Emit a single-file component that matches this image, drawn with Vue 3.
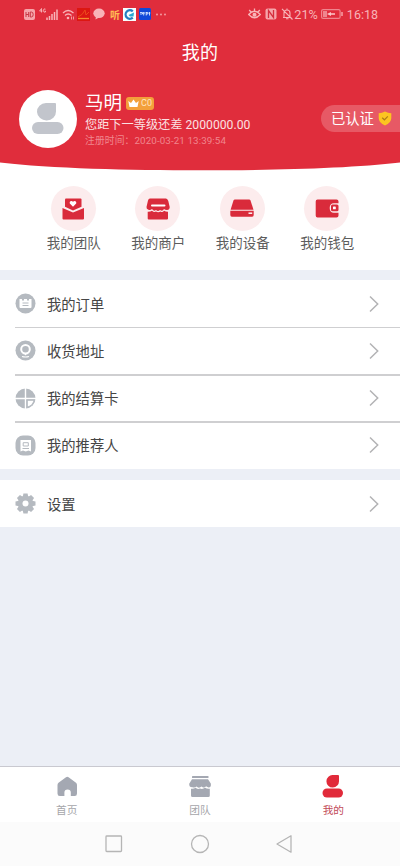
<script setup>
const shortcuts = [
  { id: 'team', label: '我的团队' },
  { id: 'shop', label: '我的商户' },
  { id: 'device', label: '我的设备' },
  { id: 'wallet', label: '我的钱包' },
]
const rows = [
  { id: 'order', label: '我的订单' },
  { id: 'address', label: '收货地址' },
  { id: 'card', label: '我的结算卡' },
  { id: 'referrer', label: '我的推荐人' },
  { id: 'settings', label: '设置' },
]
const tabs = [
  { id: 'home', label: '首页' },
  { id: 'group', label: '团队' },
  { id: 'mine', label: '我的' },
]
</script>

<template>
  <div class="screen">
    <header class="hero">
      <svg class="hero-bg" viewBox="0 0 400 171" preserveAspectRatio="none">
        <path d="M0 0H400V162.500C350 168.500 270 170.300 200 170.300S50 168.500 0 162.500Z" fill="#e02d3c" />
      </svg>
      <div class="status">
        <div class="status-left">
          <svg width="11" height="11" viewBox="0 0 11 11"><rect width="11" height="11" rx="2" fill="#f6a5aa" /><path d="M2 3V8M2 5.500H4.700M4.700 3V8M6.300 3V8H7.300Q9.200 8 9.200 5.500T7.300 3Z" fill="none" stroke="#c83744" stroke-width="1" /></svg>
          <svg class="signal" width="20" height="12" viewBox="0 0 20 12"><path d="M2.500 .5L.6 3H3.500M2.500 .5V4.500M6.500 1.200Q4.500 0 4.500 2.500T6.500 4V3H5.700" fill="none" stroke="#f8b4b8" stroke-width=".9" /><path d="M8 9.500V12M10.500 8V12M13 6V12M15.500 4V12M18 1.500V12" stroke="#f8b4b8" stroke-width="1.500" /></svg>
          <svg class="wifi" width="13" height="11" viewBox="0 0 13 11"><path d="M1 4Q6 -1 11.500 4M3 6.500Q6 3.500 9.500 6.500" fill="none" stroke="#f8b4b8" stroke-width="1.300" /><circle cx="6" cy="9" r="1.300" fill="#f8b4b8" /><path d="M9.500 7.500V10.500M11.500 7.500V10.500" stroke="#f8b4b8" stroke-width=".8" /></svg>
          <svg class="red-app" width="13" height="13" viewBox="0 0 13 13"><rect width="13" height="13" fill="#dc1712" /><path d="M1 9Q6 7 8 2L9 7L12 4" fill="none" stroke="#ec4b1c" stroke-width="1" /><path d="M1 10.500H12" stroke="#f58a30" stroke-width="1.300" /></svg>
          <svg class="chat" width="12" height="12" viewBox="0 0 12 12"><ellipse cx="6" cy="5.300" rx="5.700" ry="4.800" fill="#f8b4b8" /><path d="M3 8L2.500 11.500L7 9" fill="#f8b4b8" /></svg>
          <span class="listen">听</span>
          <svg class="blue-app" width="13" height="13" viewBox="0 0 13 13"><rect width="13" height="13" fill="#f7ffff" /><path d="M9.800 3.300A4.300 4.300 0 1 0 9.800 9.700" fill="none" stroke="#247fc2" stroke-width="2.300" /><path d="M5.500 7L11 4.500L10.500 8.500H7Z" fill="#28a8d2" /></svg>
          <svg class="bank-app" width="12" height="12" viewBox="0 0 12 12"><rect width="12" height="12" rx="1.500" fill="#1148d9" /><path d="M1 4.500H3.500V6H1M4.700 4V7.500M4 5H6M7.200 4V7.500M6.800 4.500H8.800V6H7M10.500 4V7.500M9.500 5H11.300" fill="none" stroke="#d8e5ff" stroke-width=".9" /></svg>
          <svg class="more" width="10" height="3" viewBox="0 0 10 3"><circle cx="1" cy="1.500" r=".9" fill="#f6a5aa" /><circle cx="5" cy="1.500" r=".9" fill="#f6a5aa" /><circle cx="9" cy="1.500" r=".9" fill="#f6a5aa" /></svg>
        </div>
        <div class="status-right">
          <svg width="13" height="12" viewBox="0 0 13 12"><path d="M.7 6.500Q6.500 0 12.300 6.500Q6.500 13 .7 6.500ZM6.500 3V.5M3 4L1.200 2M10 4L11.800 2" fill="none" stroke="#f8b4b8" stroke-width="1.300" /><circle cx="6.500" cy="6.800" r="2" fill="#f8b4b8" /></svg>
          <svg class="nfc" width="12" height="12" viewBox="0 0 12 12"><rect x=".5" y=".5" width="11" height="11" rx="2" fill="#f6a5aa" /><path d="M3.500 10V2.500L8.500 9.500V2" fill="none" stroke="#d52e3d" stroke-width="1.300" /></svg>
          <svg class="bell" width="12" height="12" viewBox="0 0 12 12"><path d="M2 9.500H10.500M3 9V5Q3 2 6 2T9 5V9M5 10.800H7.500M1 .8L11.500 11.500M6 2V.6" fill="none" stroke="#f8b4b8" stroke-width="1.100" /></svg>
          <span class="percent">21%</span>
          <svg class="battery" width="22" height="10" viewBox="0 0 22 10"><rect x=".6" y=".6" width="18.500" height="8.800" rx="1.500" fill="none" stroke="#ef858e" stroke-width="1.200" /><rect x="2" y="2" width="4" height="6" fill="#ef858e" /><path d="M6 5L10 3V4.300H14V5.700H10V7Z" fill="#fbc6c9" /><path d="M21 3V7" stroke="#f8a2a8" stroke-width="1.500" /></svg>
          <span class="clock">16:18</span>
        </div>
      </div>
      <h1>我的</h1>
      <div class="profile">
        <div class="avatar">
          <svg width="32" height="32" viewBox="0 0 32 32" fill="#c2c5cc"><path d="M14 0H23Q24 0 24 1V8.500A9.500 8.700 0 1 1 14 0Z" /><rect y="19" width="31.500" height="12" rx="6" /></svg>
        </div>
        <div class="info">
          <div class="name-line"><span class="name">马明</span><span class="level"><svg width="11" height="9" viewBox="0 0 11 9"><path d="M.3 2L3 4L5.500 .5L8 4L10.700 2L9.500 8H1.500Z" fill="#fff" /></svg>C0</span></div>
          <div class="upgrade">您距下一等级还差 2000000.00</div>
          <div class="registered">注册时间：2020-03-21 13:39:54</div>
        </div>
        <div class="verified"><span>已认证</span><svg width="14" height="15" viewBox="0 0 14 15"><path d="M7 .4Q10 2 13.300 2.200V7Q13.300 12 7 14.500Q.7 12 .7 7V2.200Q4 2 7 .4Z" fill="#fcc421" /><path d="M4.200 6.700L6.400 8.800L9.800 5.300" fill="none" stroke="#ad7c18" stroke-width="1.200" /></svg></div>
      </div>
    </header>

    <nav class="shortcuts">
      <div v-for="s in shortcuts" :key="s.id" class="shortcut">
        <div class="disc">
          <svg v-if="s.id === 'team'" width="24" height="24" viewBox="0 0 24 24"><path d="M4 2.500Q4 1.500 5 1.500H19.500Q20.500 1.500 20.500 2.500V9.700L12 13.500L4 9.700Z" fill="#d92b3b" /><path d="M12 9.700L8.800 6.500Q8.300 3.700 10.500 3.900Q11.700 4 12 5Q12.500 3.900 13.500 3.900Q15.700 4 15.200 6.500Z" fill="#fff" /><path d="M1.500 11L12 15.500L23 11V21.500Q23 22.500 22 22.500H2.500Q1.500 22.500 1.500 21.500Z" fill="#d92b3b" /></svg>
          <svg v-else-if="s.id === 'shop'" width="24" height="24" viewBox="0 0 24 24"><path d="M4 1.500H20Q21.500 1.500 22.300 4L23.700 10Q23.700 13 21 13Q19 13 18 12Q16.500 15 14 13Q12 15 10 13Q8 15 6 12Q4.500 13.500 2.500 12.800Q.2 12.300 .5 10L2 3.500Q2.500 1.500 4 1.500Z" fill="#d92b3b" /><rect x="5" y="7.500" width="14.500" height="2" rx="1" fill="#fff" /><path d="M1.700 14.700Q4.500 14.800 6 13.700Q8 15.800 10 14.500Q12 16 14.500 14.500Q16.500 16 18 13.700Q20 14.800 22 14.700V21.500Q22 22.500 21 22.500H2.700Q1.700 22.500 1.700 21.500Z" fill="#d92b3b" /></svg>
          <svg v-else-if="s.id === 'device'" width="24" height="24" viewBox="0 0 24 24"><path d="M3.500 3.500Q3.900 2.500 4.900 2.500H19.100Q20.100 2.500 20.500 3.500L23.500 12.700H.6Z" fill="#d92b3b" /><path d="M.3 13.800H23.700V18Q23.700 19.800 22.200 19.800H1.800Q.3 19.800 .3 18Z" fill="#d92b3b" /><rect x="18.500" y="15.500" width="3.700" height="1.400" fill="#fff" /></svg>
          <svg v-else width="24" height="24" viewBox="0 0 24 24"><path d="M2.500 2.500H21.500Q23.500 2.500 23.500 4.500V6.200H19Q14.700 6.200 14.700 11T19 15.700H23.500V18.500Q23.500 20.500 21.500 20.500H2.500Q.7 20.500 .7 18.500V4.500Q.7 2.500 2.500 2.500Z" fill="#d92b3b" /><rect x="16" y="7.600" width="7.500" height="6.600" rx="1.500" fill="#d92b3b" /><rect x="18" y="9.500" width="2.800" height="2.800" rx=".6" fill="#fff" /></svg>
        </div>
        <span>{{ s.label }}</span>
      </div>
    </nav>

    <main class="list">
      <div v-for="r in rows" :key="r.id" class="row" :class="r.id">
        <svg class="row-icon" width="21" height="21" viewBox="0 0 21 21">
          <template v-if="r.id === 'order'"><circle cx="10.500" cy="10.500" r="10" fill="#b5bac0" /><path d="M4.500 6H7V7.500H9V6H12V7.500H14V6H16.500V14Q16.500 15 15.500 15H5.500Q4.500 15 4.500 14Z" fill="#fff" /><path d="M7.500 10H13.500M7.500 12.500H13.500" stroke="#b5bac0" stroke-width="1" /></template>
          <template v-else-if="r.id === 'address'"><circle cx="10.500" cy="10.500" r="10" fill="#b5bac0" /><circle cx="10.500" cy="9.200" r="4.300" fill="none" stroke="#fff" stroke-width="2" /><path d="M8.500 13L10.500 15.500L12.500 13Z" fill="#fff" /><path d="M7 16.500Q10.500 17.500 14 16.500" fill="none" stroke="#fff" stroke-width="1.200" /></template>
          <template v-else-if="r.id === 'card'"><circle cx="10.500" cy="10.500" r="10" fill="#b5bac0" /><path d="M10.500 0V21M0 10.500H21" stroke="#fff" stroke-width="1.400" /><path d="M12.200 12.200H19.300Q18 18 12.200 19.400Z" fill="#fff" stroke="#b5bac0" stroke-width="1.200" /></template>
          <template v-else-if="r.id === 'referrer'"><rect x=".5" y=".5" width="20" height="20" rx="7.500" fill="#b5bac0" /><path d="M5.500 5H16V16.500L13.500 15.500L10.700 16.500L8 15.500L5.500 16.500Z" fill="#fff" /><path d="M8.200 7.700H13.300V11H8.200ZM7.500 13.500H14" fill="none" stroke="#b5bac0" stroke-width="1" /></template>
          <template v-else><path v-for="n in 8" :key="n" d="M8.400 0.500H12.600L13.500 5H7.500Z" :transform="`rotate(${n * 45} 10.500 10.500)`" fill="#b5bac0" /><circle cx="10.500" cy="10.500" r="7.700" fill="#b5bac0" /><circle cx="10.500" cy="10.500" r="3" fill="#fff" /></template>
        </svg>
        <span class="row-label">{{ r.label }}</span>
        <svg width="10" height="18" viewBox="0 0 10 18"><path d="M1 1.500L8.700 9L1 16.500" fill="none" stroke="#b3b3b5" stroke-width="1.500" /></svg>
      </div>
    </main>

    <footer class="tabs">
      <div v-for="t in tabs" :key="t.id" class="tab" :class="{ active: t.id === 'mine' }">
        <svg width="24" height="24" viewBox="0 0 24 24" fill="currentColor">
          <path v-if="t.id === 'home'" d="M11 2.300Q12.300 1.300 13.600 2.300L21 7.800Q22 8.500 22 10V18.500Q22 21 19.700 21H15.800V17.500Q15.800 14.500 12.600 14.500T9.400 17.500V21H4.800Q2.500 21 2.500 18.500V10Q2.500 8.500 3.500 7.800Z" />
          <template v-else-if="t.id === 'group'"><rect x="4" y="1" width="16.500" height="2" rx=".6" /><path d="M4 4.200H20L22.800 8.500Q23.500 12.500 20.500 12.500L18 11.200Q17 13 15 12.500L13.500 11.500Q12 13 10 12.500L8.500 11.500Q7 13 4.500 12.300Q1 12.500 1.200 8.800Z" /><path d="M3 13.700Q5.500 14.300 7.500 12.800Q9.500 14.700 12 13.500Q14.500 14.700 17 12.800Q19.500 14.300 21.800 13.700V20.500Q21.800 22 20.300 22H4.500Q3 22 3 20.500Z" /></template>
          <template v-else><path d="M12 0H17Q18 0 18 1V6A6.300 6.300 0 1 1 12 0Z" /><rect x="1.500" y="13.500" width="20.500" height="9" rx="4.500" /></template>
        </svg>
        <span>{{ t.label }}</span>
      </div>
    </footer>

    <div class="system-nav">
      <svg width="18" height="18" viewBox="0 0 18 18"><rect x="1" y="1" width="15.500" height="15.500" rx=".8" /></svg>
      <svg width="20" height="20" viewBox="0 0 20 20"><circle cx="10" cy="10" r="8.500" /></svg>
      <svg width="18" height="20" viewBox="0 0 18 20"><path d="M16 1.800V18.200L2 10Z" stroke-linejoin="round" /></svg>
    </div>
  </div>
</template>

<style>
body { margin: 0; }
</style>

<style scoped>
* { box-sizing: border-box; }
.screen { width: 400px; height: 866px; display: flex; flex-direction: column; overflow: hidden; background: #eceff6; font-family: Roboto, "Noto Sans CJK SC", sans-serif; white-space: nowrap; }
svg { display: block; flex: none; }
.hero { position: relative; flex: none; height: 171px; background: #fff; color: #fff; }
.hero-bg { position: absolute; inset: 0; width: 400px; height: 171px; }
.status { position: relative; height: 28px; padding: 0 22px 0 24px; display: flex; justify-content: space-between; align-items: center; color: #f8b4b8; }
.status-left, .status-right { display: flex; align-items: center; height: 28px; }
.signal { margin-left: 4px; }
.wifi { margin-left: 3px; }
.red-app { margin-left: 2px; }
.chat { margin-left: 3px; }
.listen { width: 14px; margin-left: 3px; font-size: 10px; font-weight: 700; color: #ffbc54; text-align: center; }
.blue-app { margin-left: 1px; }
.bank-app { margin-left: 3px; }
.more { margin-left: 5px; }
.nfc { margin-left: 4px; }
.bell { margin-left: 4px; }
.percent { margin-left: 1px; font-size: 12.700px; }
.battery { margin-left: 3px; }
.clock { margin-left: 4px; font-size: 12.500px; }
h1 { position: relative; margin: 0; height: 48px; line-height: 49px; text-align: center; font-size: 18px; font-weight: 400; letter-spacing: .3px; }
.profile { position: relative; height: 86px; padding: 14px 0 0 19px; display: flex; align-items: flex-start; }
.avatar { width: 58px; height: 58px; border-radius: 50%; background: #fff; display: grid; place-items: center; padding-bottom: 1px; }
.info { margin-left: 8px; flex: 1; }
.name-line { height: 26px; display: flex; align-items: center; }
.name { font-size: 18.500px; line-height: 26px; }
.level { margin-left: 4px; width: 28px; height: 13px; border-radius: 3px; display: flex; align-items: center; justify-content: center; gap: 2px; background: #f3a03b; color: #ffe3c0; font-size: 9px; }
.upgrade { height: 16px; line-height: 18px; font-size: 12.200px; color: #fbe0e2; }
.registered { height: 16px; line-height: 17px; font-size: 9.800px; color: #f0868e; letter-spacing: .1px; }
.verified { margin-top: 15px; width: 79px; height: 27px; padding-left: 10px; display: flex; align-items: center; gap: 4px; border-radius: 14px 0 0 14px; background: #e75965; font-size: 14.300px; }
.verified span { position: relative; top: -1px; }
.shortcuts { height: 99px; flex: none; padding: 15px 31px 0; display: grid; grid-template-columns: repeat(4, 84.500px); background: #fff; color: #5d5d5d; font-size: 13.500px; }
.shortcut { display: flex; flex-direction: column; align-items: center; line-height: 20px; gap: 1.500px; }
.shortcut span { margin-left: 1px; }
.disc { width: 45px; height: 45px; border-radius: 50%; background: #fceced; display: grid; place-items: center; }
.list { flex: 1; padding-top: 10px; }
.row { position: relative; height: 47.250px; padding: 0 21px 0 15px; display: flex; align-items: center; background: #fff; color: #454545; font-size: 14.300px; }
.order::after, .address::after, .card::after { content: ""; position: absolute; left: 15px; right: 0; bottom: -1px; z-index: 1; height: 1.500px; background: #cfcfd1; }
.row-label { flex: 1; margin-left: 11px; padding-bottom: 1px; }
.settings { margin-top: 11px; }
.tabs { flex: none; height: 56px; border-top: 1px solid #c9c9d0; display: grid; grid-template-columns: repeat(3, 1fr); background: #fff; color: #a4a8b2; font-size: 10.700px; }
.tab { padding-top: 8px; display: flex; flex-direction: column; align-items: center; line-height: 16px; gap: 3.500px; }
.tab span { color: #a6a6aa; }
.tab.active { color: #e12a3a; }
.tab.active span { color: #c24a58; }
.system-nav { flex: none; height: 44px; padding-left: 105px; display: flex; align-items: center; gap: 67px; background: #fbfbfb; }
.system-nav svg { fill: none; stroke: #b5b5b5; stroke-width: 1.300; }
.system-nav svg:last-child { margin-left: -2px; }
</style>
